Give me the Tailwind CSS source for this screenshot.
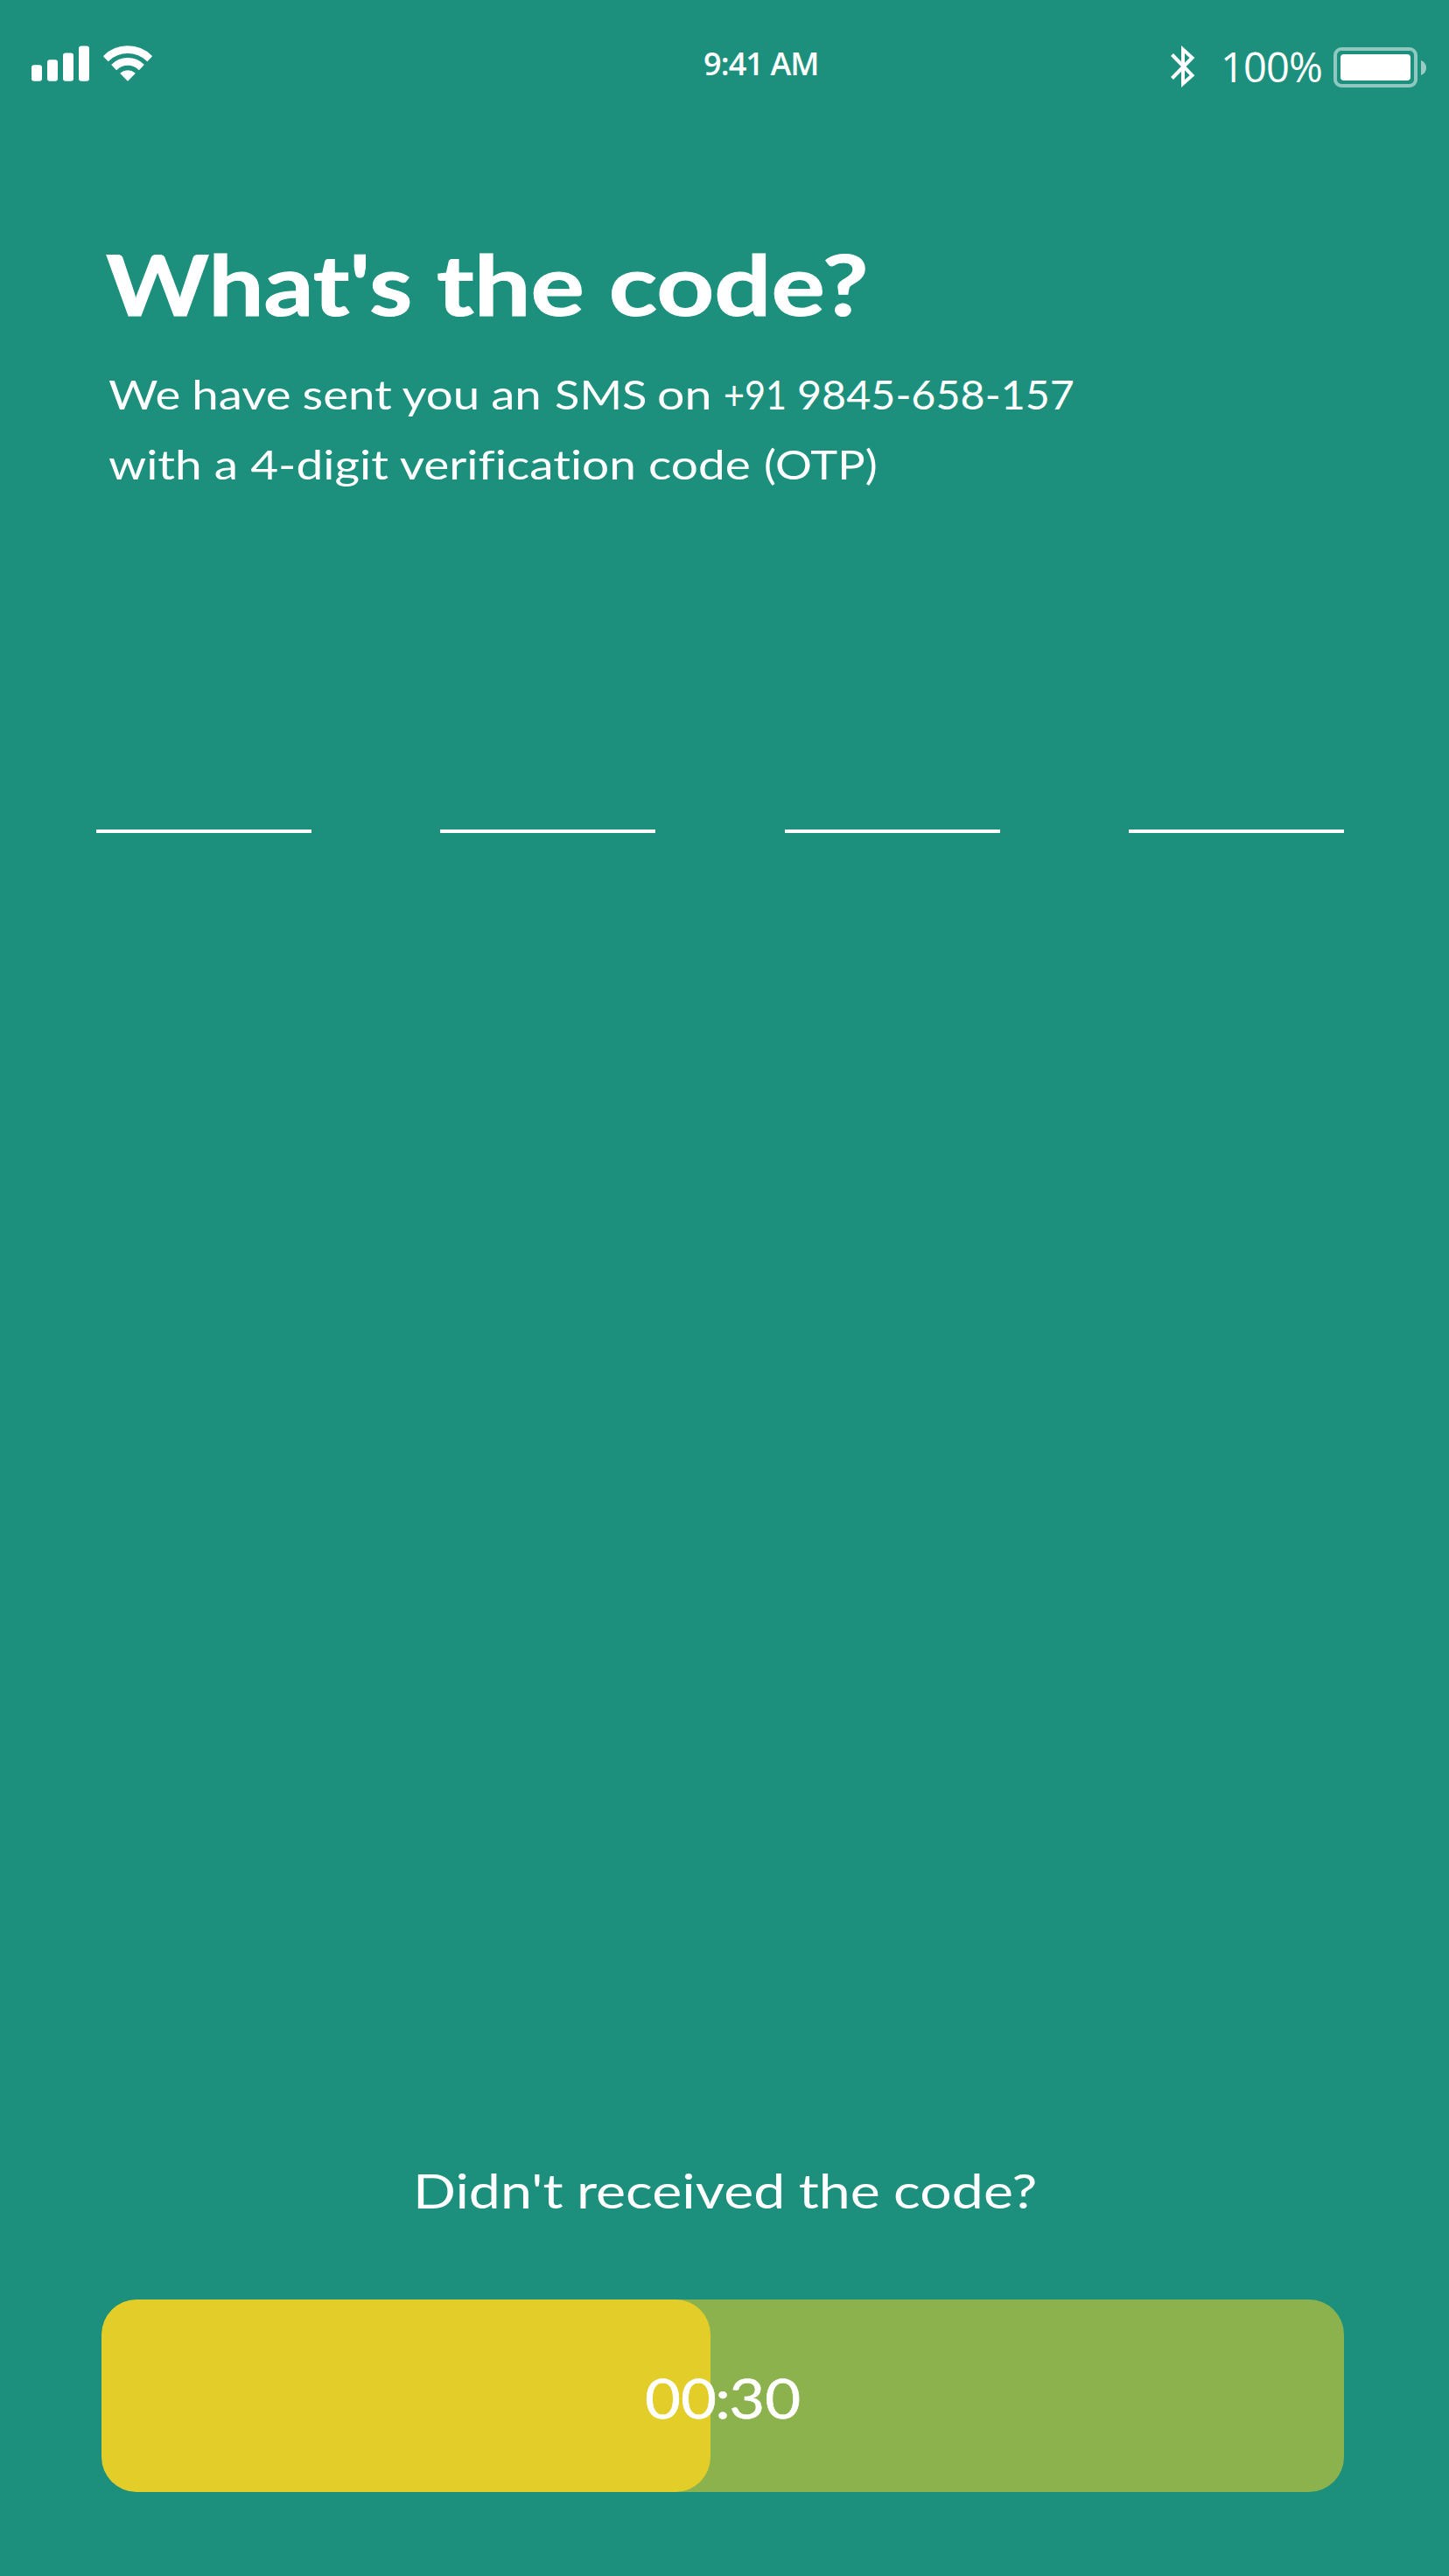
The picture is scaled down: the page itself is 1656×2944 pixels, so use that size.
<!DOCTYPE html>
<html lang="en">
<head>
<meta charset="utf-8">
<title>Verify code</title>
<script src="https://cdn.jsdelivr.net/npm/@tailwindcss/browser@4"></script>
</head>
<body class="bg-[#1d907d] text-white">
<div class="flex h-[2944px] w-[1656px] flex-col overflow-hidden font-['Lato',sans-serif] [font-variant-ligatures:none]">

  <header class="flex h-[268px] items-start font-['Open_Sans',sans-serif]">
    <svg class="ml-9 mt-[52px] block h-[42px] w-[140px]" viewBox="0 0 140 42" fill="#fff">
      <rect x="0" y="22.3" width="12" height="18.5" rx="3"/>
      <rect x="18" y="16.2" width="12" height="24.6" rx="3"/>
      <rect x="36" y="8.4" width="12" height="32.4" rx="3"/>
      <rect x="54" y="0.4" width="12" height="40.4" rx="3"/>
      <g stroke="#fff" stroke-width="1.6" stroke-linejoin="round">
        <path d="M82.9 12.3A38.5 38.5 0 0 1 137.1 12.3L132.3 17.3A32 32 0 0 0 87.7 17.3Z"/>
        <path d="M92.2 22A25.5 25.5 0 0 1 127.8 22L122.8 27.2A18.5 18.5 0 0 0 97.2 27.2Z"/>
        <path d="M102.2 31.8A12.5 12.5 0 0 1 117.8 31.8L110 39.7Z"/>
      </g>
    </svg>
    <span class="ml-[628px] mt-[49px] w-[534px] whitespace-nowrap text-[36px] leading-[48px] font-semibold tracking-[-0.9px]">9:41 AM</span>
    <svg class="mt-[51px] block h-[50px] w-[28px]" viewBox="0 0 28 50" fill="none" stroke="#fff" stroke-width="4">
      <path d="M1.5 11.5L24.5 35.2L14 44.5V5.5L24.5 15L1.5 38.5" stroke-miterlimit="6"/>
    </svg>
    <span class="ml-[29px] mt-11 w-[129px] whitespace-nowrap text-[47px] leading-[64px] tracking-[-0.85px]">100%</span>
    <div class="mt-[54px] flex items-center gap-1">
      <div class="h-[46px] w-[96px] rounded-[9px] border-4 border-white/50 p-1">
        <div class="h-full rounded-[4px] bg-white"></div>
      </div>
      <svg class="block h-[17px] w-[6px]" viewBox="0 0 6 17" fill="#fff" fill-opacity=".55"><path d="M0 0Q6 2.5 6 8.5T0 17Z"/></svg>
    </div>
  </header>

  <main class="flex flex-1 flex-col">
    <h1 class="ml-[121px] flex text-[96px] leading-[112px] font-bold whitespace-nowrap [-webkit-text-stroke:1px_white]">
      <span class="w-[378px]"><span class="inline-block origin-left scale-x-[1.17]">What's</span></span>
      <span><span class="inline-block origin-left scale-x-[1.197]">the code?</span></span>
    </h1>

    <div class="ml-[124px] mt-[31px] text-[46px] leading-[80px] whitespace-nowrap">
      <p class="flex">
        <span class="w-[510px]"><span class="inline-block origin-left scale-x-[1.187] [word-spacing:-0.8px]">We have sent you an</span></span>
        <span class="w-[117px]"><span class="inline-block origin-left scale-x-[1.138]">SMS</span></span>
        <span class="w-[76px]"><span class="inline-block origin-left scale-x-[1.206]">on</span></span>
        <span class="w-[84px]"><span class="inline-block origin-left scale-x-[0.9]">+91</span></span>
        <span><span class="inline-block origin-left scale-x-[1.053]">9845-658-157</span></span>
      </p>
      <p class="flex">
        <span class="w-[749px]"><span class="inline-block origin-left scale-x-[1.195]">with a 4-digit verification code</span></span>
        <span><span class="inline-block origin-left scale-x-[1.14]">(OTP)</span></span>
      </p>
    </div>

    <div class="ml-[110px] mt-[377px] flex gap-[147.3px]">
      <div class="h-1 w-[246px] bg-white"></div>
      <div class="h-1 w-[246px] bg-white"></div>
      <div class="h-1 w-[246px] bg-white"></div>
      <div class="h-1 w-[246px] bg-white"></div>
    </div>
  </main>

  <footer class="px-[116px] pb-[96px]">
    <p class="ml-[356px] w-max origin-left scale-x-[1.183] text-[54.5px] leading-[66px] [word-spacing:-1px]">Didn't received the code?</p>
    <button class="mt-[92px] block h-[220px] w-[1420px] overflow-hidden rounded-[40px] bg-[#8bb24d]">
      <span class="grid h-full items-center">
        <span class="col-start-1 row-start-1 h-full w-[696px] rounded-[40px] bg-[#e2cd29]"></span>
        <span class="z-10 col-start-1 row-start-1 w-full pt-[3px] text-center text-[62px] leading-none [-webkit-text-stroke:0.5px_white]"><span class="inline-block scale-x-[1.14]">0<span class="tracking-[-1.5px]">0:</span>30</span></span>
      </span>
    </button>
  </footer>
</div>
</body>
</html>
